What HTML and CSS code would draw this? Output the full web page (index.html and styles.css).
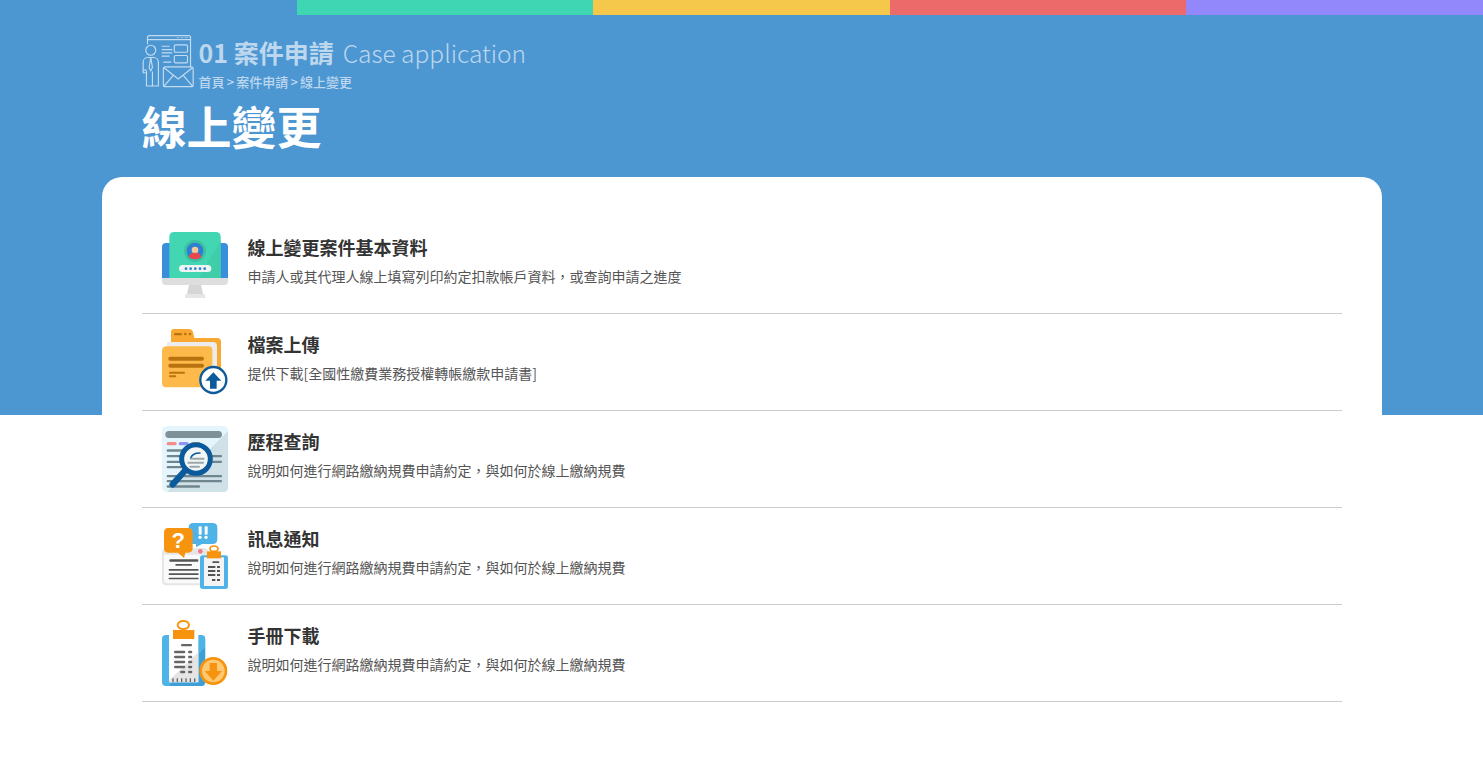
FILE: index.html
```html
<!DOCTYPE html>
<html lang="zh-Hant">
<head>
    <meta charset="UTF-8">
    <meta name="viewport" content="width=device-width, initial-scale=1.0">
    <title>線上變更</title>
    <link rel="stylesheet" href="styles.css">
</head>
<body>
    <div class="color-bar">
        <span></span>
        <span class="teal"></span>
        <span class="yellow"></span>
        <span class="red"></span>
        <span class="purple"></span>
    </div>

    <!-- Page heading -->
    <header class="page-head">
        <div class="section-row">
            <svg class="section-icon" viewBox="36 44 156 160" fill="none" stroke="#c4dcf0" stroke-width="3.5">
                <path d="M52 72V52a6 6 0 0 1 6-6h118a6 6 0 0 1 6 6v86a6 6 0 0 1-6 6h-70"/>
                <path d="M52 58h130"/>
                <path d="M140 52h8M152 52h8M164 52h10" stroke-width="2"/>
                <circle cx="62" cy="90" r="15"/>
                <path d="M39 150v-24a14 14 0 0 1 14-14h18a14 14 0 0 1 14 14v72H49v-46M39 150h10M39 150v8h10M62 112l-5 30 5 10 5-10-5-30M67 198v-44"/>
                <path d="M95 78h24M95 88h32M95 98h32M95 108h24M100 126h24"/>
                <rect x="133" y="74" width="40" height="22" rx="4"/>
                <rect x="133" y="106" width="40" height="22" rx="4"/>
                <rect x="100" y="140" width="90" height="60" rx="6" fill="#4c96d2"/>
                <path d="M102 143l43 34 43-34M102 198l28-32M188 198l-28-32"/>
            </svg>
            <div>
                <div class="section-title"><strong>01 案件申請</strong><span>Case application</span></div>
                <div class="breadcrumb">首頁 &gt; 案件申請 &gt; 線上變更</div>
            </div>
        </div>
        <h1>線上變更</h1>
    </header>

    <main class="card">
        <ul class="item-list">
            <li class="item">
                <svg class="item-icon" viewBox="36 36 198 198">
                    <path d="M48 69h174a12 12 0 0 1 12 12v93H36V81a12 12 0 0 1 12-12z" fill="#3a8fdc"/>
                    <path d="M36 174h198v9a12 12 0 0 1-12 12H48a12 12 0 0 1-12-12z" fill="#dedede"/>
                    <path d="M117 195h36l6 27h-48z" fill="#d6d6d6"/>
                    <path d="M105 226q0-4 8-4h44q8 0 8 4v8h-60z" fill="#e6e6e6"/>
                    <path d="M72 36h126a14 14 0 0 1 14 14v124H58V50a14 14 0 0 1 14-14z" fill="#43d6b2"/>
                    <path d="M212 62v112h-66z" fill="#3fcdaa"/>
                    <circle cx="135" cy="93" r="33" fill="#3cc0a2"/>
                    <circle cx="135" cy="93" r="25" fill="#2f7fd0"/>
                    <circle cx="135" cy="90" r="10" fill="#f8c99a"/>
                    <path d="M116 112q2-14 19-14t19 14q-8 6-19 6t-19-6z" fill="#e8474c"/>
                    <rect x="87" y="135" width="97" height="21" rx="10.5" fill="#eef4f2"/>
                    <g fill="#2f7fd0">
                        <circle cx="108" cy="146" r="4"/><circle cx="122" cy="146" r="4"/><circle cx="136" cy="146" r="4"/><circle cx="150" cy="146" r="4"/><circle cx="164" cy="146" r="4"/>
                    </g>
                </svg>
                <div class="item-text">
                    <h3>線上變更案件基本資料</h3>
                    <p>申請人或其代理人線上填寫列印約定扣款帳戶資料，或查詢申請之進度</p>
                </div>
            </li>
            <li class="item">
                <svg class="item-icon" viewBox="36 33 198 198">
                    <path d="M72 33h45q9 0 12 8l4 19h68q12 0 12 12v110H63V42q0-9 9-9z" fill="#f9a832"/>
                    <rect x="72" y="45" width="24" height="7" rx="3.5" fill="#b8730f"/>
                    <circle cx="106" cy="48" r="4" fill="#b8730f"/><circle cx="120" cy="48" r="4" fill="#b8730f"/>
                    <path d="M51 72h138q12 0 12 12v100H51z" fill="#ececec"/>
                    <path d="M50 85h125q12 0 12 12v99q0 12-12 12H50q-14 0-14-14V99q0-14 14-14z" fill="#fdb94a"/>
                    <rect x="55" y="116" width="107" height="12" rx="6" fill="#b8730f"/>
                    <rect x="55" y="137" width="107" height="12" rx="6" fill="#b8730f"/>
                    <rect x="57" y="161" width="48" height="6" rx="3" fill="#b8730f"/>
                    <rect x="57" y="172" width="22" height="6" rx="3" fill="#b8730f"/>
                    <circle cx="190" cy="186" r="39" fill="#fff" stroke="#0a5a9c" stroke-width="7"/>
                    <path d="M190 163l-24 25h14v24h20v-24h14z" fill="#0a5a9c"/>
                </svg>
                <div class="item-text">
                    <h3>檔案上傳</h3>
                    <p>提供下載[全國性繳費業務授權轉帳繳款申請書]</p>
                </div>
            </li>
            <li class="item">
                <svg class="item-icon" viewBox="36 33 198 198">
                    <rect x="36" y="33" width="198" height="198" rx="14" fill="#e4f6fb"/>
                    <path d="M234 48v169q0 14-14 14H51z" fill="#cfe1e7"/>
                    <rect x="46" y="48" width="170" height="21" rx="10.5" fill="#7f9198"/>
                    <rect x="50" y="81" width="30" height="10" rx="5" fill="#f58a8a"/>
                    <rect x="86" y="81" width="30" height="10" rx="5" fill="#8f94f5"/>
                    <rect x="122" y="81" width="30" height="10" rx="5" fill="#f5b860"/>
                    <g fill="#6f868e">
                        <rect x="50" y="103" width="110" height="7" rx="3"/>
                        <rect x="50" y="120" width="166" height="7" rx="3"/>
                        <rect x="50" y="137" width="166" height="7" rx="3"/>
                        <rect x="50" y="153" width="130" height="7" rx="3"/>
                        <rect x="50" y="180" width="166" height="7" rx="3"/>
                        <rect x="50" y="195" width="166" height="7" rx="3"/>
                        <rect x="50" y="211" width="100" height="7" rx="3"/>
                    </g>
                    <path d="M104 168l-36 40" stroke="#0a5a9c" stroke-width="19" stroke-linecap="round"/>
                    <circle cx="138" cy="132" r="43" fill="#f4f6f6" stroke="#0a5a9c" stroke-width="15"/>
                    <path d="M122 130q4-16 28-16" fill="none" stroke="#0a5a9c" stroke-width="5" stroke-linecap="round"/>
                    <g fill="#9aa8ac">
                        <rect x="120" y="128" width="44" height="6" rx="3"/>
                        <rect x="112" y="140" width="50" height="6" rx="3"/>
                        <rect x="118" y="152" width="32" height="6" rx="3"/>
                    </g>
                </svg>
                <div class="item-text">
                    <h3>歷程查詢</h3>
                    <p>說明如何進行網路繳納規費申請約定，與如何於線上繳納規費</p>
                </div>
            </li>
            <li class="item">
                <svg class="item-icon" viewBox="36 33 198 198">
                    <path d="M50 108h110q14 0 14 12v100H50q-14 0-14-14V122q0-14 14-14z" fill="#e6e6e6"/>
                    <path d="M42 128h126v86H52q-10 0-10-10z" fill="#fafafa"/>
                    <circle cx="151" cy="118" r="7" fill="#f2788a"/>
                    <path d="M130 33h58q14 0 14 14v35q0 14-14 14h-32l-18 10v-10h-8q-14 0-14-14V47q0-14 14-14z" fill="#4fb3e8"/>
                    <g fill="#fff">
                        <rect x="146" y="43" width="9" height="25" rx="3"/><circle cx="150" cy="76" r="5"/>
                        <rect x="164" y="43" width="9" height="25" rx="3"/><circle cx="168" cy="76" r="5"/>
                    </g>
                    <path d="M54 48h60q14 0 14 14v46q0 14-14 14h-8l-4 16-18-16H54q-12 0-12-14V62q0-14 12-14z" fill="#f7940f"/>
                    <text class="icon-mark" x="85" y="108">?</text>
                    <g fill="#555">
                        <rect x="58" y="142" width="87" height="7" rx="3"/>
                        <rect x="76" y="156" width="50" height="5" rx="2"/>
                        <rect x="56" y="171" width="90" height="5" rx="2"/>
                        <rect x="56" y="184" width="90" height="5" rx="2"/>
                        <rect x="56" y="197" width="90" height="5" rx="2"/>
                    </g>
                    <rect x="150" y="130" width="84" height="101" rx="8" fill="#4fb3e8"/>
                    <path d="M162 136h60v86h-60z" fill="#f4f4f4"/>
                    <ellipse cx="192" cy="110" rx="12" ry="8" fill="none" stroke="#f7940f" stroke-width="5"/>
                    <rect x="171" y="118" width="42" height="21" fill="#f7940f"/>
                    <g fill="#555">
                        <rect x="187" y="148" width="21" height="5" rx="2"/>
                        <rect x="174" y="162" width="22" height="6"/><rect x="201" y="162" width="9" height="6"/>
                        <rect x="174" y="174" width="22" height="6"/><rect x="201" y="174" width="9" height="6"/>
                        <rect x="174" y="186" width="22" height="6"/><rect x="201" y="186" width="9" height="6"/>
                        <rect x="186" y="201" width="10" height="6"/><rect x="201" y="201" width="9" height="6"/>
                    </g>
                </svg>
                <div class="item-text">
                    <h3>訊息通知</h3>
                    <p>說明如何進行網路繳納規費申請約定，與如何於線上繳納規費</p>
                </div>
            </li>
            <li class="item">
                <svg class="item-icon" viewBox="36 30 198 198">
                    <rect x="36" y="75" width="130" height="153" rx="12" fill="#4fb3e8"/>
                    <path d="M165 112v104q0 12-12 12H56z" fill="#3d9fd6"/>
                    <path d="M57 75h88v142H57z" fill="#fff"/>
                    <path d="M145 127v90H57v-6z" fill="#e4e4e4"/>
                    <ellipse cx="100" cy="45" rx="17" ry="12" fill="none" stroke="#f7940f" stroke-width="6"/>
                    <path d="M69 60h64v27H69z" fill="#f7940f"/>
                    <g fill="#666">
                        <rect x="93" y="102" width="33" height="7" rx="3"/>
                        <rect x="72" y="122" width="34" height="8" rx="4"/><rect x="114" y="122" width="13" height="8" rx="4"/>
                        <rect x="72" y="137" width="34" height="8" rx="4"/><rect x="114" y="137" width="13" height="8" rx="4"/>
                        <rect x="72" y="152" width="34" height="8" rx="4"/><rect x="114" y="152" width="13" height="8" rx="4"/>
                        <rect x="72" y="167" width="34" height="8" rx="4"/><rect x="114" y="167" width="13" height="8" rx="4"/>
                        <rect x="90" y="182" width="16" height="8" rx="4"/><rect x="114" y="182" width="13" height="8" rx="4"/>
                        <rect x="67" y="205" width="4" height="11"/><rect x="80" y="205" width="4" height="11"/><rect x="93" y="205" width="4" height="11"/><rect x="106" y="205" width="4" height="11"/><rect x="119" y="205" width="4" height="11"/><rect x="132" y="205" width="4" height="11"/>
                    </g>
                    <circle cx="190" cy="183" r="38" fill="#ffc873" stroke="#f7940f" stroke-width="8"/>
                    <path d="M179 159h22v24h15l-26 29-26-29h15z" fill="#f7940f"/>
                </svg>
                <div class="item-text">
                    <h3>手冊下載</h3>
                    <p>說明如何進行網路繳納規費申請約定，與如何於線上繳納規費</p>
                </div>
            </li>
        </ul>
    </main>
</body>
</html>
```

FILE: styles.css
```css
* {
    box-sizing: border-box;
}
html {
    background: #fff linear-gradient(#4c96d2, #4c96d2) no-repeat 0 0 / 100% 415px;
}
body {
    margin: 0;
    font-family: "Noto Sans CJK TC", "Noto Sans", sans-serif;
    color: #333;
}
.color-bar {
    display: flex;
    height: 15px;
}
.color-bar span {
    flex: 1;
}
.teal { background-color: #3fd6b3; }
.yellow { background-color: #f5c74a; }
.red { background-color: #ec6a6a; }
.purple { background-color: #9388fb; }

.page-head {
    width: 1200px;
    height: 162px;
    margin: 0 auto;
    padding-top: 20px;
}
.section-row {
    display: flex;
    gap: 5px;
    height: 61px;
}
.section-icon {
    width: 52px;
    height: 53px;
    flex: none;
}
.section-title {
    display: flex;
    align-items: baseline;
    gap: 9px;
    height: 38px;
    line-height: 35px;
    color: #bcd7ee;
}
.section-title strong {
    font-size: 25px;
}
.section-title span {
    font-size: 24.5px;
    font-weight: 300;
}
.breadcrumb {
    font-size: 13px;
    line-height: 18px;
    font-weight: 500;
    word-spacing: -0.75px;
    color: #bcd7ee;
}
h1 {
    margin: 0;
    font-size: 45px;
    line-height: 60px;
    font-weight: bold;
    color: #fff;
}

.card {
    width: 1280px;
    margin: 0 auto;
    padding: 40px;
    background-color: #fff;
    border-radius: 20px 20px 0 0;
}
.item-list {
    list-style: none;
    margin: 0;
    padding: 0;
}
.item {
    display: flex;
    align-items: center;
    gap: 20px;
    padding: 15px 20px;
    border-bottom: 1px solid #ccc;
}
.item-icon {
    width: 66px;
    height: 66px;
    flex: none;
}
.item-text {
    padding-bottom: 8px;
}
.item-text h3 {
    margin: 0 0 4px;
    font-size: 18px;
    line-height: 26px;
    font-weight: bold;
    color: #333;
}
.item-text p {
    margin: 0;
    font-size: 14px;
    line-height: 24px;
    color: #555;
}
.icon-mark {
    font-family: "Liberation Sans", sans-serif;
    font-size: 66px;
    font-weight: bold;
    fill: #fff;
    text-anchor: middle;
}
```
